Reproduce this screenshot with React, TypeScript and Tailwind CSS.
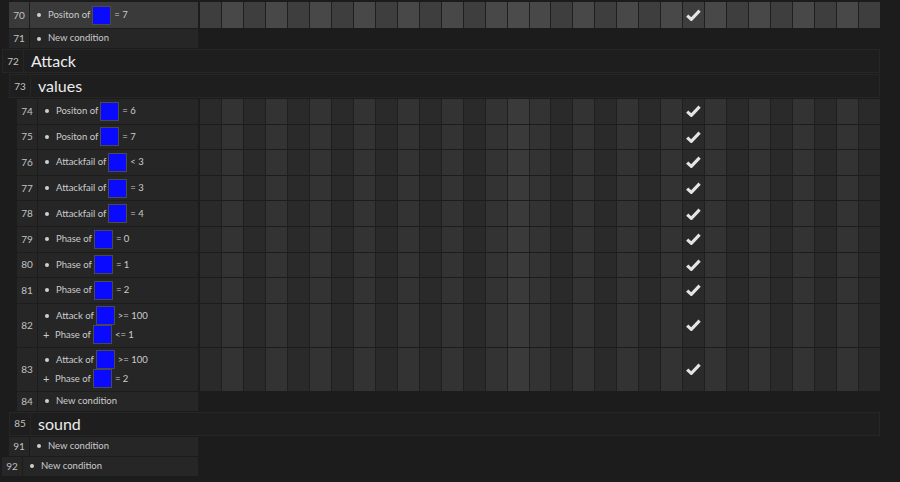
import React from 'react'

type Line = { bullet: '•' | '+'; label: string; op: string }

type CondRow = {
  kind: 'cond'
  num: number
  depth: 0 | 1 | 2
  lines: Line[]
  grid?: boolean
  hot?: boolean
  check?: boolean
  h: string
}

type HeadRow = { kind: 'head'; num: number; depth: 0 | 1; label: string; h: string }

const COLS = 31
const CHECK_COL = 22
const HL_COL = 14

const one = (label: string, op: string): Line[] => [{ bullet: '•', label, op }]
const nc: Line[] = [{ bullet: '•', label: 'New condition', op: '' }]

const rows: (CondRow | HeadRow)[] = [
  { kind: 'cond', num: 70, depth: 1, lines: one('Positon of', '= 7'), grid: true, hot: true, check: true, h: 'h-[26px]' },
  { kind: 'cond', num: 71, depth: 1, lines: nc, h: 'h-[19px]' },
  { kind: 'head', num: 72, depth: 0, label: 'Attack', h: 'h-[24px]' },
  { kind: 'head', num: 73, depth: 1, label: 'values', h: 'h-[24px]' },
  { kind: 'cond', num: 74, depth: 2, lines: one('Positon of', '= 6'), grid: true, check: true, h: 'h-[24.6px]' },
  { kind: 'cond', num: 75, depth: 2, lines: one('Positon of', '= 7'), grid: true, check: true, h: 'h-[24.6px]' },
  { kind: 'cond', num: 76, depth: 2, lines: one('Attackfail of', '< 3'), grid: true, check: true, h: 'h-[24.6px]' },
  { kind: 'cond', num: 77, depth: 2, lines: one('Attackfail of', '= 3'), grid: true, check: true, h: 'h-[24.6px]' },
  { kind: 'cond', num: 78, depth: 2, lines: one('Attackfail of', '= 4'), grid: true, check: true, h: 'h-[24.6px]' },
  { kind: 'cond', num: 79, depth: 2, lines: one('Phase of', '= 0'), grid: true, check: true, h: 'h-[24.6px]' },
  { kind: 'cond', num: 80, depth: 2, lines: one('Phase of', '= 1'), grid: true, check: true, h: 'h-[24.6px]' },
  { kind: 'cond', num: 81, depth: 2, lines: one('Phase of', '= 2'), grid: true, check: true, h: 'h-[24.6px]' },
  {
    kind: 'cond', num: 82, depth: 2, grid: true, check: true, h: 'h-[43px]',
    lines: [
      { bullet: '•', label: 'Attack of', op: '>= 100' },
      { bullet: '+', label: 'Phase of', op: '<= 1' },
    ],
  },
  {
    kind: 'cond', num: 83, depth: 2, grid: true, check: true, h: 'h-[43px]',
    lines: [
      { bullet: '•', label: 'Attack of', op: '>= 100' },
      { bullet: '+', label: 'Phase of', op: '= 2' },
    ],
  },
  { kind: 'cond', num: 84, depth: 2, lines: nc, h: 'h-[19px]' },
  { kind: 'head', num: 85, depth: 1, label: 'sound', h: 'h-[24px]' },
  { kind: 'cond', num: 91, depth: 1, lines: nc, h: 'h-[19px]' },
  { kind: 'cond', num: 92, depth: 0, lines: nc, h: 'h-[19px]' },
]

const indent = { 0: 'ml-[2px]', 1: 'ml-[9px]', 2: 'ml-[17px]' }
const leftW = { 0: 'w-[196px]', 1: 'w-[189px]', 2: 'w-[181px]' }
const headW = { 0: 'w-[878px]', 1: 'w-[871px]' }

function Check() {
  return (
    <svg width="17" height="14" viewBox="0 0 17 14">
      <path d="M2.2 7.6 L6.3 11.4 L14.6 2.6" fill="none" stroke="#e4e4e4" strokeWidth="3.1" strokeLinejoin="round" />
    </svg>
  )
}

function Swatch() {
  return <span className="inline-block w-[19px] h-[19px] bg-[#0a0aff] border border-[#4a4a4a] ml-[2px] mr-[3px]" />
}

function Grid({ hot, check }: { hot?: boolean; check?: boolean }) {
  return (
    <div className="ml-[2px] w-[680px] h-full grid grid-cols-[repeat(31,minmax(0,1fr))] gap-x-px bg-[#1f1f1f]">
      {Array.from({ length: COLS }).map((_, i) => {
        let bg = i % 2 ? 'bg-[#333333]' : 'bg-[#2a2a2a]'
        if (i === HL_COL) bg = 'bg-[#3a3a3a]'
        if (hot) bg = i === HL_COL ? 'bg-[#4b4b4b]' : i % 2 ? 'bg-[#484848]' : 'bg-[#3e3e3e]'
        return (
          <div key={i} className={`${bg} flex items-center justify-center`}>
            {check && i === CHECK_COL && <Check />}
          </div>
        )
      })}
    </div>
  )
}

function Cond({ r }: { r: CondRow }) {
  const bg = r.hot ? 'bg-[#3a3a3a]' : 'bg-[#262626]'
  return (
    <div className={`flex ${r.h} mb-px`}>
      <div className={`${indent[r.depth]} ${leftW[r.depth]} ${bg} flex h-full`}>
        <div className="w-[21px] shrink-0 border-r border-[#1c1c1c] flex items-center justify-center text-[10px] text-[#c2c2c2]">
          {r.num}
        </div>
        <div className="flex flex-col justify-center pl-[6px]">
          {r.lines.map((l, i) => (
            <div key={i} className="flex items-center h-[19px] text-[9.5px] text-[#cccccc]">
              {l.bullet === '•' ? (
                <span className="w-[4px] h-[4px] rounded-full bg-[#d0d0d0] ml-px mr-[7px]" />
              ) : (
                <span className="w-[4px] ml-[-1px] mr-[8px] text-[11px] leading-none">+</span>
              )}
              <span>{l.label}</span>
              {l.op && <Swatch />}
              {l.op && <span>{l.op}</span>}
            </div>
          ))}
        </div>
      </div>
      {r.grid && <Grid hot={r.hot} check={r.check} />}
    </div>
  )
}

function Head({ r }: { r: HeadRow }) {
  return (
    <div className={`flex ${r.h} mb-px`}>
      <div className={`${indent[r.depth]} ${headW[r.depth]} flex h-full bg-[#1e1e1e] border border-[#262626]`}>
        <div className="w-[21px] shrink-0 border-r border-[#262626] flex items-center justify-center text-[10px] text-[#c2c2c2]">
          {r.num}
        </div>
        <div className="pl-[7px] flex items-center text-[16px] text-[#ececec]">{r.label}</div>
      </div>
    </div>
  )
}

export default function App() {
  return (
    <div className="w-[900px] h-[482px] overflow-hidden bg-[#1c1c1c] pt-[2px] font-['Lato','Noto_Sans',sans-serif]">
      {rows.map(r => (r.kind === 'cond' ? <Cond key={r.num} r={r} /> : <Head key={r.num} r={r} />))}
    </div>
  )
}
